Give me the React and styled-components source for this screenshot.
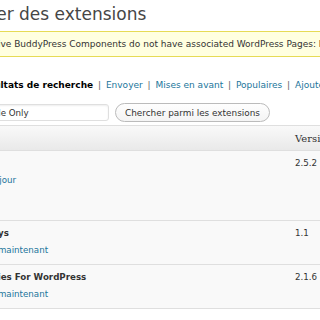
import styled, { createGlobalStyle } from "styled-components";

const GlobalStyle = createGlobalStyle`
  html, body {
    margin: 0;
    padding: 0;
    background: #fff;
  }
  body {
    font-family: "DejaVu Sans", sans-serif;
    font-size: 8.7px;
    color: #333;
  }
`;

const COLUMNS = "376px 80px 100px 320px";

const Viewport = styled.div`
  width: 320px;
  height: 320px;
  overflow: hidden;
`;

const Wrap = styled.div`
  width: 900px;
  margin-left: -88px;
`;

const Title = styled.h2`
  margin: 0 0 0 33px;
  padding-top: 4px;
  font-size: 17px;
  line-height: 20px;
  font-weight: normal;
  color: #464646;
`;

const Notice = styled.div`
  margin-top: 7px;
  padding: 0 8px;
  height: 24px;
  line-height: 24px;
  font-size: 9px;
  background: #ffffe0;
  border: 1px solid #e6db55;
  border-radius: 3px;
  white-space: nowrap;
  color: #333;
`;

const Nav = styled.ul`
  display: flex;
  margin: 20px 0 0 -2px;
  padding: 0;
  list-style: none;
  font-size: 9px;
  line-height: 16px;
  white-space: pre;
  color: #666;
`;

const NavLink = styled.a`
  padding: 0 2px;
  text-decoration: none;
  color: ${(p) => (p.$current ? "#000" : "#21759b")};
  font-weight: ${(p) => (p.$current ? "bold" : "normal")};
`;

const SearchForm = styled.form`
  display: flex;
  align-items: center;
  margin-top: 10px;
`;

const TypeSelect = styled.select`
  width: 56px;
  height: 17px;
  margin-right: 7px;
  font: inherit;
  border: 1px solid #dfdfdf;
  border-radius: 3px;
  background: #fff;
`;

const SearchInput = styled.input`
  box-sizing: border-box;
  width: 134px;
  height: 17px;
  padding: 0 3px;
  font: inherit;
  color: #333;
  background: #fff;
  border: 1px solid #dfdfdf;
  border-radius: 3px;
  box-shadow: inset 0 1px 2px rgba(0, 0, 0, 0.07);
  outline: none;
`;

const SearchButton = styled.button`
  box-sizing: border-box;
  height: 19px;
  margin-left: 6px;
  padding: 0 9px;
  font-family: "DejaVu Sans", sans-serif;
  font-size: 8.9px;
  color: #333;
  background: linear-gradient(to bottom, #fefefe, #f4f4f4);
  border: 1px solid #bbb;
  border-radius: 11px;
  white-space: nowrap;
`;

const Table = styled.div`
  width: 876px;
  margin-top: 3px;
  background: #f9f9f9;
  border-top: 1px solid #dfdfdf;
`;

const HeadRow = styled.div`
  display: grid;
  grid-template-columns: ${COLUMNS};
  align-items: center;
  height: 24px;
  background: linear-gradient(to bottom, #f9f9f9, #e9e9e9);
  border-bottom: 1px solid #dfdfdf;
`;

const HeadCell = styled.div`
  padding: 1px 7px 0;
  font-family: "DejaVu Serif", serif;
  font-size: 10px;
  color: #333;
`;

const Row = styled.div`
  display: grid;
  grid-template-columns: ${COLUMNS};
  border-bottom: 1px solid #dfdfdf;
`;

const Cell = styled.div`
  padding: 4px 7px 5px;
  line-height: 17px;
  white-space: nowrap;
  color: #333;
`;

const Name = styled.strong`
  display: block;
  color: #333;
`;

const ActionLink = styled.a`
  color: #21759b;
  text-decoration: none;
`;

const Sep = styled.span`
  margin: 0 4px;
  color: #666;
`;

const Desc = styled.div`
  line-height: 15px;
  white-space: normal;
`;

const tabs = [
  { label: "Rechercher" },
  { label: "Résultats de recherche", current: true },
  { label: "Envoyer" },
  { label: "Mises en avant" },
  { label: "Populaires" },
  { label: "Ajoutées récemment" },
  { label: "Mises à jour récentes" },
];

const plugins = [
  {
    name: "Akismet",
    action: "Mettre à jour",
    version: "2.5.2",
    desc: [
      "Used by millions, Akismet is quite possibly the best way",
      "in the world to protect your blog from comment and",
      "trackback spam. It keeps your site protected from spam",
      "even while you sleep.",
    ],
  },
  {
    name: "Member Birthdays",
    action: "Installer maintenant",
    version: "1.1",
    desc: ["Displays the birthdays of your members."],
  },
  {
    name: "Custom Categories For WordPress",
    action: "Installer maintenant",
    version: "2.1.6",
    desc: ["Custom categories for your posts."],
  },
];

function App() {
  return (
    <Viewport>
      <GlobalStyle />
      <Wrap>
        <Title>Installer des extensions</Title>
        <Notice>
          The following active BuddyPress Components do not have associated
          WordPress Pages: <strong>Register</strong>, <strong>Activate</strong>.
          Repair
        </Notice>
        <Nav>
          {tabs.map((tab, i) => (
            <li key={tab.label}>
              <NavLink href="#" $current={tab.current}>
                {tab.label}
              </NavLink>
              {i < tabs.length - 1 ? " | " : ""}
            </li>
          ))}
        </Nav>
        <SearchForm onSubmit={(e) => e.preventDefault()}>
          <TypeSelect defaultValue="term">
            <option value="term">Terme</option>
          </TypeSelect>
          <SearchInput defaultValue="Profile Only" />
          <SearchButton type="submit">Chercher parmi les extensions</SearchButton>
        </SearchForm>
        <Table>
          <HeadRow>
            <HeadCell>Nom</HeadCell>
            <HeadCell>Version</HeadCell>
            <HeadCell>Note</HeadCell>
            <HeadCell>Description</HeadCell>
          </HeadRow>
          {plugins.map((p) => (
            <Row key={p.name}>
              <Cell>
                <Name>{p.name}</Name>
                <ActionLink href="#">Détails</ActionLink>
                <Sep>|</Sep>
                <ActionLink href="#">{p.action}</ActionLink>
              </Cell>
              <Cell>{p.version}</Cell>
              <Cell>★★★★☆</Cell>
              <Cell>
                <Desc>
                  {p.desc.map((line) => (
                    <div key={line}>{line}</div>
                  ))}
                </Desc>
              </Cell>
            </Row>
          ))}
        </Table>
      </Wrap>
    </Viewport>
  );
}

export default App;
